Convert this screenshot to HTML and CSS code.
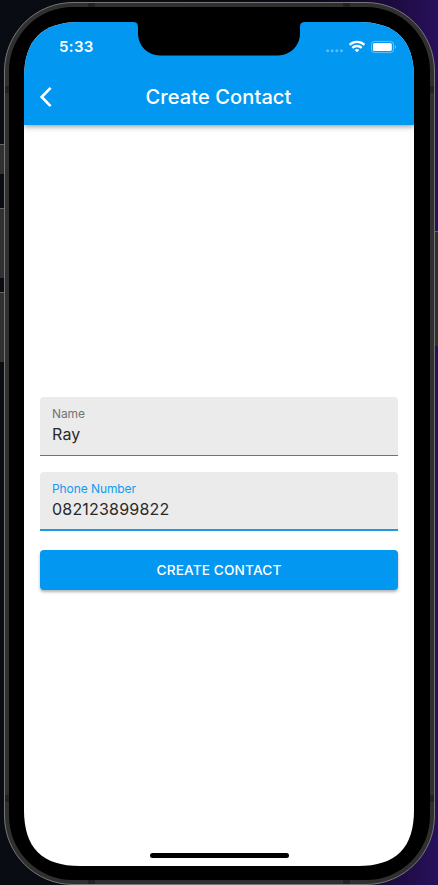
FILE: index.html
```html
<!DOCTYPE html>
<html lang="en">
<head>
<meta charset="utf-8">
<title>Create Contact</title>
<link rel="stylesheet" href="styles.css">
</head>
<body>
<div class="desktop">
  <i class="key key-mute"></i><i class="key key-up"></i><i class="key key-down"></i><i class="key key-power"></i>
  <div class="phone">
    <i class="band band-l1"></i><i class="band band-l2"></i><i class="band band-r1"></i><i class="band band-r2"></i>
    <i class="band band-t1"></i><i class="band band-t2"></i><i class="band band-b1"></i><i class="band band-b2"></i>
    <div class="bezel">
      <div class="screen">
        <header class="header">
          <div class="status">
            <span class="time">5:33</span>
            <svg class="indicators" width="72" height="16" viewBox="0 0 72 16">
              <g fill="#fff" opacity=".35"><circle cx="3.7" cy="11.8" r="1.5"/><circle cx="8.2" cy="11.8" r="1.5"/><circle cx="12.8" cy="11.8" r="1.5"/><circle cx="17.4" cy="11.8" r="1.5"/></g>
              <g transform="translate(2 0)">
                <g fill="none" stroke="#fff" stroke-width="2.3"><path d="M23.600 5.800a10.900 10.900 0 0 1 14.800 0"/><path d="M26.300 8.800a7 7 0 0 1 9.400 0"/></g>
                <path d="M28.700 10.900a3.700 3.700 0 0 1 4.600 0L31 13.300z" fill="#fff"/>
                <rect x="45.500" y="2.400" width="22" height="11.200" rx="3" fill="none" stroke="#fff" opacity=".4"/>
                <rect x="47" y="3.900" width="18.800" height="8.200" rx="1.6" fill="#fff"/>
                <path d="M68.800 6v3.800c1.800-.5 1.800-3.300 0-3.800" fill="#fff" opacity=".4"/>
              </g>
            </svg>
          </div>
          <div class="bar">
            <svg class="back" width="14" height="22" viewBox="0 0 14 22"><path d="M11.600 1.900 2.700 11l8.900 9.100" fill="none" stroke="#fff" stroke-width="2.700"/></svg>
            <h1 class="title">Create Contact</h1>
          </div>
        </header>
        <main class="form">
          <div class="field"><span class="label">Name</span><span class="value">Ray</span></div>
          <div class="field active"><span class="label">Phone Number</span><span class="value">082123899822</span></div>
          <div class="button" role="button">CREATE CONTACT</div>
        </main>
        <div class="home"></div>
        <svg class="notch" width="174" height="34" viewBox="0 0 174 34"><path d="M0 0H174C169 0 168 1.500 168 6V11.500C168 24 158 33.400 146 33.400H28C16 33.400 6 24 6 11.500V6C6 1.500 5 0 0 0Z"/></svg>
      </div>
    </div>
  </div>
</div>
</body>
</html>
```
FILE: styles.css
```css
* { box-sizing: border-box; }
body { margin: 0; font-family: Inter, "Liberation Sans", sans-serif; }
.desktop {
  position: relative;
  width: 438px;
  height: 885px;
  padding: 2px 3px 0 4px;
  overflow: hidden;
  background: linear-gradient(90deg, #090d13 0, #080b11 60px, #090711 300px, #1b0b3d 390px, #28105c 438px);
}
.key { position: absolute; background: #303030; border-top: 1px solid #666; }
.key-mute { left: 0; top: 144px; width: 5px; height: 30px; }
.key-up { left: 0; top: 208px; width: 5px; height: 70px; }
.key-down { left: 0; top: 292px; width: 5px; height: 70px; }
.key-power { left: 434px; top: 231px; width: 4px; height: 115px; }
.phone {
  position: relative;
  width: 431px;
  height: 883px;
  padding: 4px;
  border: 1px solid #777674;
  border-radius: 69px;
  background: #303030;
}
.band { position: absolute; background: #222; }
.band-l1, .band-l2 { left: 0; width: 4px; height: 7px; }
.band-r1, .band-r2 { right: 0; width: 4px; height: 7px; }
.band-l1, .band-r1 { top: 83px; }
.band-l2, .band-r2 { top: 792px; }
.band-t1, .band-t2 { top: 0; width: 7px; height: 4px; }
.band-b1, .band-b2 { bottom: 0; width: 7px; height: 4px; }
.band-t1, .band-b1 { left: 83px; }
.band-t2, .band-b2 { right: 84px; }
.bezel {
  height: 873px;
  padding: 15px 16px 14px 15px;
  border-radius: 64px;
  background: #000;
}
.screen {
  position: relative;
  display: flex;
  flex-direction: column;
  width: 390px;
  height: 844px;
  background: #fff;
  clip-path: path("M0 56C0 18 18 0 56 0H334C372 0 390 18 390 56V788C390 826 372 844 334 844H56C18 844 0 826 0 788Z");
}
.header {
  height: 103px;
  flex: none;
  color: #fff;
  background: #0297f0;
  box-shadow: 0 2px 4px rgba(0,0,0,.25), 0 2px 8px rgba(0,0,0,.12);
}
.status {
  display: flex;
  justify-content: space-between;
  align-items: center;
  height: 47px;
  padding: 2px 18px 0 35px;
}
.time { font-size: 15px; font-weight: 600; letter-spacing: .35px; }
.bar { display: flex; align-items: center; height: 56px; padding: 0 16px 0 15px; }
.back { flex: none; }
.title {
  flex: 1;
  margin: 0 14px 0 0;
  text-align: center;
  font-size: 20px;
  font-weight: 500;
  line-height: 24px;
  letter-spacing: .1px;
}
.form { flex: 1; padding: 271.6px 16px 0; }
.field {
  display: flex;
  flex-direction: column;
  height: 59px;
  margin-bottom: 16px;
  padding: 9px 12px 0;
  border-bottom: 1px solid #737373;
  border-radius: 4px 4px 0 0;
  background: #ebebeb;
}
.label { margin-bottom: 1px; font-size: 12px; line-height: 16px; color: #737373; letter-spacing: -.08px; }
.value { font-size: 16px; line-height: 22px; color: #292929; letter-spacing: .2px; }
.active { height: 59.5px; margin-bottom: 19px; border-bottom: 2px solid #2098e4; }
.active .label { color: #1499ed; }
.button {
  height: 40px;
  border-radius: 4px;
  color: #fff;
  background: #0297f0;
  box-shadow: 0 2px 3px rgba(0,0,0,.3);
  text-align: center;
  font-size: 13.7px;
  font-weight: 500;
  line-height: 40.6px;
  letter-spacing: .12px;
}
.home { width: 139px; height: 5px; margin: 0 auto 8px; border-radius: 3px; background: #000; }
.notch { position: absolute; left: 108px; top: 0; }
```
